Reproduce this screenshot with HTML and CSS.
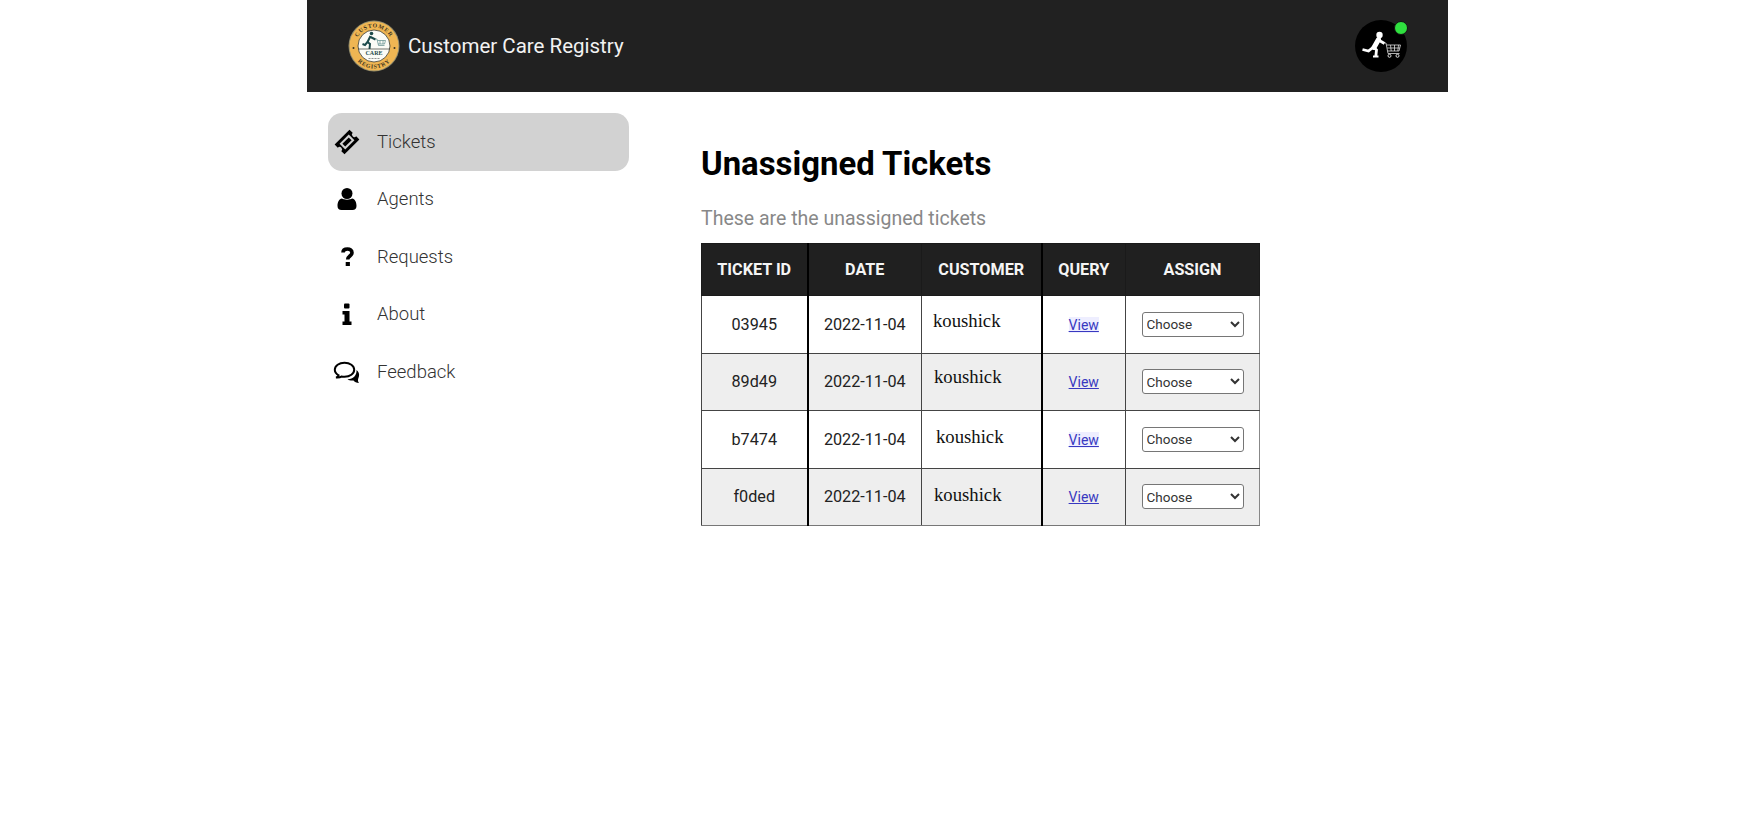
FILE: index.html
```html
<!DOCTYPE html>
<html lang="en">
<head>
    <meta charset="UTF-8">
    <meta name="viewport" content="width=device-width, initial-scale=1.0">
    <title>Customer Care Registry</title>
    <link rel="stylesheet" href="styles.css">
</head>
<body>
    <div class="page">
        <header class="topbar">
            <div class="brand">
                <svg class="brand-logo" viewBox="0 0 52 52" width="52" height="52">
                    <defs>
                        <path id="arcTop" d="M7.500 26a18.500 18.500 0 0 1 37 0"/>
                        <path id="arcBottom" d="M3.500 26a22.500 22.500 0 0 0 45 0"/>
                    </defs>
                    <circle cx="26" cy="26" r="25.500" fill="#8f8a6c"/>
                    <circle cx="26" cy="26" r="24.500" fill="#efb653"/>
                    <circle cx="26" cy="26" r="16" fill="#fbfbf6" stroke="#3a3a30" stroke-width="0.800"/>
                    <text class="logo-ring"><textPath href="#arcTop" startOffset="50%" text-anchor="middle">CUSTOMER</textPath></text>
                    <text class="logo-ring"><textPath href="#arcBottom" startOffset="50%" text-anchor="middle">REGISTRY</textPath></text>
                    <circle cx="5.500" cy="28" r="1" fill="#3a3320"/>
                    <circle cx="46.500" cy="28" r="1" fill="#3a3320"/>
                    <circle cx="23.500" cy="13.500" r="1.800" fill="#1d4a4a"/>
                    <path d="M22.500 16l-3 6M22.500 17l5 2.500M19.500 22l2.500 2-.5 5M19.500 22l-2.500 3-2.500-1" fill="none" stroke="#1d4a4a" stroke-width="2"/>
                    <path d="M27.500 19h1.500l1.500 6.500h6M29.500 20.500h8l-1 3.500h-6.500M32 20.500v3.500M35 20.500v3.500" fill="none" stroke="#5a8a8a" stroke-width="0.700"/>
                    <path d="M10 29h32" stroke="#3a3a30" stroke-width="0.700"/>
                    <text class="logo-care" x="26" y="35">CARE</text>
                    <path d="M20.500 38.500h11" stroke="#777" stroke-width="0.800" stroke-dasharray="2 1"/>
                </svg>
                <span class="brand-name">Customer Care Registry</span>
            </div>
            <div class="avatar">
                <svg viewBox="0 0 52 52" width="52" height="52">
                    <circle cx="26" cy="26" r="26" fill="#000"/>
                    <circle cx="24.500" cy="15" r="3.200" fill="#fff"/>
                    <path d="M23.500 19.500l-4.500 8" fill="none" stroke="#fff" stroke-width="5" stroke-linecap="round"/>
                    <path d="M23.500 20l6 3.500M18.500 27l3 3-.7 6.500M18.500 27l-5 4-6-1.500" fill="none" stroke="#fff" stroke-width="2.800"/>
                    <path d="M18 36.500h5.500" stroke="#fff" stroke-width="2"/>
                    <path d="M29.500 23h1.500l2 10.500h11.500M31.500 25h14l-1.500 6h-11.500M35.500 25l.7 6M39.500 25v6M43.500 25l-.7 6M32.200 28h12.500" fill="none" stroke="#ddd" stroke-width="0.800"/>
                    <circle cx="34.500" cy="35.800" r="1.500" fill="none" stroke="#ddd"/>
                    <circle cx="42.500" cy="35.800" r="1.500" fill="none" stroke="#ddd"/>
                </svg>
                <span class="status-dot"></span>
            </div>
        </header>

        <div class="layout">
            <nav class="sidebar">
                <a class="nav-item active" href="#">
                    <svg class="nav-icon" viewBox="0 0 28 28" width="28" height="28">
                        <g transform="rotate(-45 14 14)">
                            <path d="M3.500 7h21v4.500a2.500 2.500 0 0 0 0 5v4.500h-21v-4.500a2.500 2.500 0 0 0 0-5z" fill="#000"/>
                            <rect x="7.500" y="10" width="13" height="8" fill="#d2d2d2"/>
                            <rect x="9.500" y="12" width="9" height="4" fill="#000"/>
                        </g>
                    </svg>
                    <span>Tickets</span>
                </a>
                <a class="nav-item" href="#">
                    <svg class="nav-icon" viewBox="0 0 28 28" width="28" height="28">
                        <circle cx="14" cy="8.500" r="5.500" fill="#000"/>
                        <path d="M9 13.500c1.500 1.500 8.500 1.500 10 0 3 .5 4.500 3.500 4.500 7.500 0 2.500-1.500 4-4 4h-11c-2.500 0-4-1.500-4-4 0-4 1.500-7 4.500-7.500z" fill="#000"/>
                    </svg>
                    <span>Agents</span>
                </a>
                <a class="nav-item" href="#">
                    <svg class="nav-icon" viewBox="0 0 28 28" width="28" height="28">
                        <path d="M10 9.500c0-2.500 2-3.500 4.500-3.500s4.500 1.300 4.500 3.700c0 3.300-4.300 3.300-4.300 6.800" fill="none" stroke="#000" stroke-width="3.600"/>
                        <rect x="12.700" y="19" width="4.200" height="4" fill="#000"/>
                    </svg>
                    <span>Requests</span>
                </a>
                <a class="nav-item" href="#">
                    <svg class="nav-icon" viewBox="0 0 28 28" width="28" height="28">
                        <rect x="11" y="3.500" width="5.500" height="5" rx="1" fill="#000"/>
                        <path d="M9.500 11h7v10.500h2v3.500h-9v-3.500h2v-7h-2z" fill="#000"/>
                    </svg>
                    <span>About</span>
                </a>
                <a class="nav-item" href="#">
                    <svg class="nav-icon" viewBox="0 0 28 28" width="28" height="28">
                        <path d="M23.500 12c2 1.500 3 3.500 2.500 6-.3 2-1.300 3-1 5 .1 .8 .5 1.500 1 2-2.500 0-4.500-1-5.500-2.500-2 .3-4.500 0-6-1.300 5 .3 9.500-3.500 9-9.200z" fill="#000"/>
                        <path d="M3 19.500c1.500-.3 2.300-1 2.600-2.200C3.200 16 1.800 14 1.800 11.800c0-4 4.300-7 9.700-7s9.700 3 9.700 7-4.300 7-9.700 7c-1 0-2 0-3-.3-1.200 1-3 1.200-5.500 1z" fill="#fff" stroke="#000" stroke-width="2"/>
                    </svg>
                    <span>Feedback</span>
                </a>
            </nav>

            <main class="content">
                <h1>Unassigned Tickets</h1>
                <p class="subtitle">These are the unassigned tickets</p>
                <table class="tickets">
                    <colgroup>
                        <col class="col-id">
                        <col class="col-date">
                        <col class="col-customer">
                        <col class="col-query">
                        <col class="col-assign">
                    </colgroup>
                    <thead>
                        <tr>
                            <th class="thick">Ticket ID</th>
                            <th>Date</th>
                            <th class="thick">Customer</th>
                            <th>Query</th>
                            <th>Assign</th>
                        </tr>
                    </thead>
                    <tbody>
                        <tr>
                            <td class="thick">03945</td>
                            <td>2022-11-04</td>
                            <td class="thick customer"><span class="name">koushick</span></td>
                            <td><a class="view seen" href="#">View</a></td>
                            <td><select><option>Choose</option></select></td>
                        </tr>
                        <tr>
                            <td class="thick">89d49</td>
                            <td>2022-11-04</td>
                            <td class="thick customer"><span class="name">koushick</span></td>
                            <td><a class="view" href="#">View</a></td>
                            <td><select><option>Choose</option></select></td>
                        </tr>
                        <tr>
                            <td class="thick">b7474</td>
                            <td>2022-11-04</td>
                            <td class="thick customer"><span class="name">koushick</span></td>
                            <td><a class="view seen" href="#">View</a></td>
                            <td><select><option>Choose</option></select></td>
                        </tr>
                        <tr>
                            <td class="thick">f0ded</td>
                            <td>2022-11-04</td>
                            <td class="thick customer"><span class="name">koushick</span></td>
                            <td><a class="view" href="#">View</a></td>
                            <td><select><option>Choose</option></select></td>
                        </tr>
                    </tbody>
                </table>
            </main>
        </div>
    </div>
</body>
</html>
```

FILE: styles.css
```css
body {
    font-family: Roboto, Arial, sans-serif;
    background-color: #fff;
    margin: 0;
}
.page {
    width: 1141px;
    margin: 0 auto;
}
.topbar {
    display: flex;
    align-items: center;
    justify-content: space-between;
    height: 92px;
    padding: 0 41px;
    background-color: #212121;
}
.brand {
    display: flex;
    align-items: center;
    gap: 8px;
}
.brand-logo {
    display: block;
}
.logo-ring {
    font-family: "Liberation Serif", serif;
    font-size: 5.800px;
    font-weight: bold;
    letter-spacing: 0.800px;
    fill: #3a3320;
}
.logo-care {
    font-family: "Liberation Serif", serif;
    font-size: 6px;
    font-weight: bold;
    text-anchor: middle;
    fill: #1d4a4a;
}
.brand-name {
    color: #f2f2f2;
    font-size: 20.500px;
}
.avatar {
    position: relative;
    width: 52px;
    height: 52px;
}
.avatar svg {
    display: block;
}
.status-dot {
    position: absolute;
    top: 1px;
    right: -1px;
    width: 12px;
    height: 12px;
    border: 1px solid #111;
    border-radius: 50%;
    background-color: #2fe03f;
}
.layout {
    display: flex;
}
.sidebar {
    display: flex;
    flex-direction: column;
    width: 301px;
    margin: 21px 0 0 21px;
}
.nav-item {
    display: flex;
    align-items: center;
    gap: 16px;
    height: 57.500px;
    padding-left: 5px;
    border-radius: 14px;
    color: #333;
    font-size: 18.500px;
    font-weight: 300;
    text-decoration: none;
}
.nav-item.active {
    background-color: #d2d2d2;
}
.nav-icon {
    flex: none;
}
.content {
    margin: 53px 0 0 72px;
}
h1 {
    margin: 0;
    color: #000;
    font-size: 32.900px;
    font-weight: 700;
    line-height: 38px;
}
.subtitle {
    margin: 23px 0 11px;
    color: #888;
    font-size: 19.500px;
    line-height: 26px;
}
.tickets {
    width: 558px;
    table-layout: fixed;
    border-collapse: collapse;
    color: #222;
    font-size: 16.200px;
    text-align: center;
}
.col-id { width: 106px; }
.col-date { width: 114px; }
.col-customer { width: 120px; }
.col-query { width: 84px; }
.col-assign { width: 134px; }
.tickets th {
    height: 51px;
    padding: 0;
    border: 1px solid #1a1a1a;
    background-color: #202020;
    color: #f5f5f5;
    font-size: 16.200px;
    font-weight: 700;
    text-transform: uppercase;
}
.tickets td {
    height: 56.500px;
    padding: 0;
    border: 1px solid #444;
}
.tickets th.thick,
.tickets td.thick {
    border-right: 2px solid #000;
}
.tickets tbody tr:nth-child(even) {
    background-color: #eee;
}
.tickets td:last-child {
    border-right-color: #888;
}
.tickets tbody tr:last-child td {
    border-bottom-color: #777;
}
.customer {
    text-align: left;
}
.name {
    position: relative;
    top: -3px;
    padding-left: 11px;
    color: #111;
    font-family: "Liberation Serif", serif;
    font-size: 18.700px;
}
.tickets tr:nth-child(2) .name {
    top: -5px;
    padding-left: 12px;
}
.tickets tr:nth-child(3) .name {
    top: -2px;
    padding-left: 14px;
}
.tickets tr:nth-child(4) .name {
    top: -2px;
    padding-left: 12px;
}
.view {
    color: #3838c0;
    font-size: 14px;
}
.view.seen {
    background-color: #eef;
}
select {
    width: 102px;
    height: 25px;
    padding: 0;
    border: 1px solid #767676;
    border-radius: 3px;
    background-color: #fff;
    color: #333;
    font-family: Roboto, Arial, sans-serif;
    font-size: 13.500px;
}
```
